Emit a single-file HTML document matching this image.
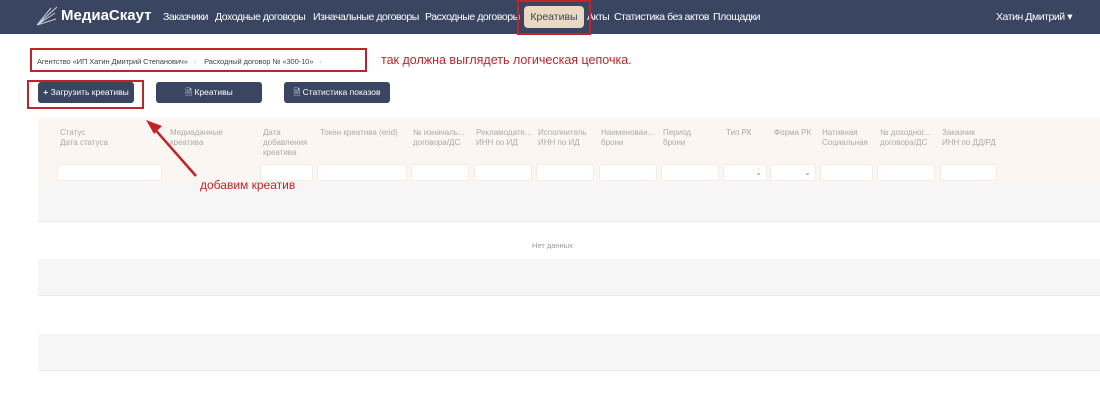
<!DOCTYPE html>
<html><head><meta charset="utf-8"><style>
*{margin:0;padding:0;box-sizing:border-box}
body{width:1100px;height:401px;background:#fff;font-family:"Liberation Sans",sans-serif;position:relative;overflow:hidden}
.nav{position:absolute;left:0;top:0;width:1100px;height:34px;background:#394561}
.abs{position:absolute;white-space:nowrap}
.nl{color:#fff;font-size:10.5px;top:11px;letter-spacing:-0.45px}
.btn{position:absolute;top:82px;height:21px;background:#394561;border-radius:3px;color:#fff;font-size:8.5px;text-align:center;line-height:21px}
.th{position:absolute;top:128px;color:#aaa;font-size:8px;line-height:10px}
.in{position:absolute;top:164px;height:17px;background:#fff;border-radius:3px;border:1px solid #f2ece6}
.row{position:absolute;left:38px;width:1062px;height:37px}
</style></head><body>
<div class="nav">
<svg class="abs" style="left:35px;top:5px" width="24" height="22" viewBox="0 0 24 22"><g stroke="#c8cdd8" stroke-width="1" fill="none"><path d="M2 20L22 2M2 20L20 8M2 20L16 3M2 20L21 14"/></g></svg>
<div class="abs" style="left:61px;top:7px;color:#fff;font-size:15px;font-weight:bold">МедиаСкаут</div>
<div class="abs nl" style="left:163px">Заказчики</div>
<div class="abs nl" style="left:215px">Доходные договоры</div>
<div class="abs nl" style="left:313px">Изначальные договоры</div>
<div class="abs nl" style="left:425px">Расходные договоры</div>
<div class="abs" style="left:524px;top:6px;width:60px;height:22px;background:#e8d9c0;border-radius:4px;color:#394561;font-size:10.5px;line-height:22px;text-align:center">Креативы</div>
<div class="abs nl" style="left:587px">Акты</div>
<div class="abs nl" style="left:614px">Статистика без актов</div>
<div class="abs nl" style="left:713px">Площадки</div>
<div class="abs nl" style="left:996px">Хатин Дмитрий ▾</div>
</div>
<div class="abs" style="left:517px;top:0;width:74px;height:35px;border:2px solid #c0242a"></div>
<div class="abs" style="left:30px;top:48px;width:337px;height:24px;border:2px solid #c0242a"></div>
<div class="abs" style="left:37px;top:57px;font-size:7.5px;color:#444;letter-spacing:-0.1px">Агентство «ИП Хатин Дмитрий Степанович» &nbsp;&nbsp;<span style="color:#bbb">›</span>&nbsp;&nbsp;&nbsp; Расходный договор № «300-10» &nbsp;&nbsp;<span style="color:#bbb">›</span></div>
<div class="abs" style="left:381px;top:53px;font-size:12.5px;color:#c0242a">так должна выглядеть логическая цепочка.</div>
<div class="btn" style="left:38px;width:96px"><b>+</b> Загрузить креативы</div>
<div class="btn" style="left:156px;width:106px">🗎 Креативы</div>
<div class="btn" style="left:284px;width:106px">🗎 Статистика показов</div>
<div class="abs" style="left:27px;top:80px;width:117px;height:29px;border:2px solid #c0242a"></div>
<div class="abs" style="left:38px;top:118px;width:1062px;height:67px;background:#fbf6f2"></div>
<div class="th" style="left:60px">Статус<br>Дата статуса</div>
<div class="th" style="left:170px">Медиаданные<br>креатива</div>
<div class="th" style="left:263px">Дата<br>добавления<br>креатива</div>
<div class="th" style="left:320px">Токен креатива (erid)</div>
<div class="th" style="left:413px">№ изначаль...<br>договора/ДС</div>
<div class="th" style="left:476px">Рекламодате...<br>ИНН по ИД</div>
<div class="th" style="left:538px">Исполнитель<br>ИНН по ИД</div>
<div class="th" style="left:601px">Наименован...<br>брони</div>
<div class="th" style="left:663px">Период<br>брони</div>
<div class="th" style="left:726px">Тип РК</div>
<div class="th" style="left:774px">Форма РК</div>
<div class="th" style="left:822px">Нативная<br>Социальная</div>
<div class="th" style="left:880px">№ доходног...<br>договора/ДС</div>
<div class="th" style="left:942px">Заказчик<br>ИНН по ДД/РД</div>
<div class="in" style="left:57px;width:105px"></div>
<div class="in" style="left:260px;width:53px"></div>
<div class="in" style="left:317px;width:90px"></div>
<div class="in" style="left:411px;width:58px"></div>
<div class="in" style="left:474px;width:58px"></div>
<div class="in" style="left:536px;width:58px"></div>
<div class="in" style="left:599px;width:58px"></div>
<div class="in" style="left:661px;width:58px"></div>
<div class="in" style="left:723px;width:44px;font-size:8px;color:#888;text-align:right;padding-right:4px;line-height:15px">⌄</div>
<div class="in" style="left:770px;width:46px;font-size:8px;color:#888;text-align:right;padding-right:4px;line-height:15px">⌄</div>
<div class="in" style="left:820px;width:53px"></div>
<div class="in" style="left:877px;width:58px"></div>
<div class="in" style="left:940px;width:57px"></div>
<div class="row" style="top:185px;background:#f6f6f6;border-bottom:1px solid #ececec"></div>
<div class="row" style="top:259px;background:#f6f6f6;border-bottom:1px solid #ececec"></div>
<div class="row" style="top:334px;background:#f6f6f6;border-bottom:1px solid #ececec"></div>
<div class="abs" style="left:532px;top:241px;font-size:7.5px;color:#999">Нет данных</div>
<svg class="abs" style="left:140px;top:112px" width="70" height="70"><path d="M56 64L12 14" stroke="#c0242a" stroke-width="2.5"/><path d="M6 8L22 14L14 22Z" fill="#c0242a"/></svg>
<div class="abs" style="left:200px;top:178px;font-size:12px;color:#c0242a">добавим креатив</div>
</body></html>
